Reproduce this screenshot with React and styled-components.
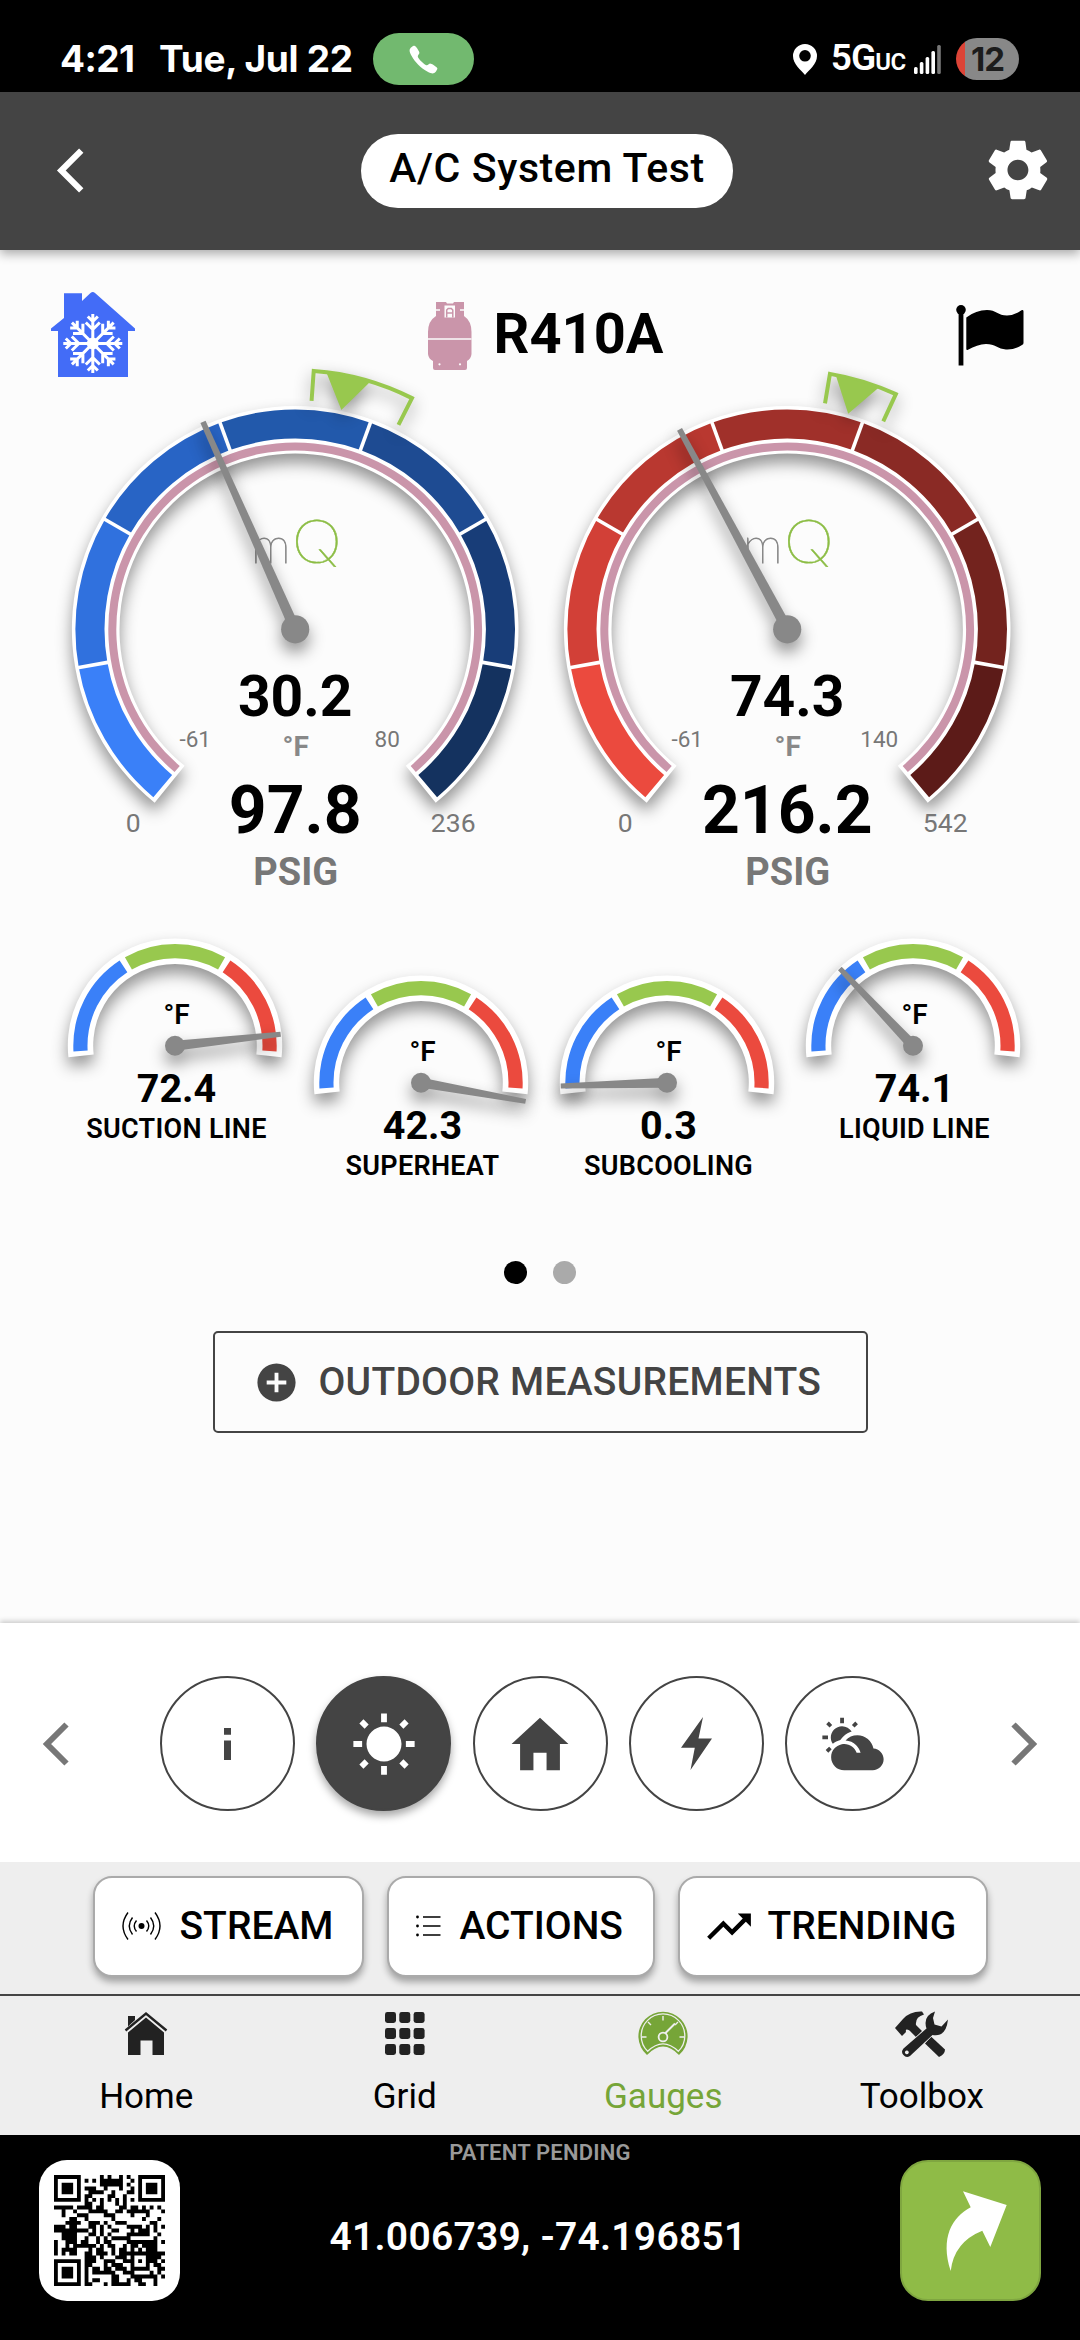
import styled, { createGlobalStyle } from "styled-components";
import {
  IoIosCall,
  IoMdAddCircle,
  IoMdHome,
  IoMdPartlySunny,
  IoMdSettings,
  IoMdSunny,
  IoMdTrendingUp,
} from "react-icons/io";

const GlobalStyle = createGlobalStyle`
    * { box-sizing: border-box; }
    body {
        margin: 0;
        background: #000;
        font-family: Roboto, "Liberation Sans", sans-serif;
        color: #000;
    }
    svg { display: block; flex: none; overflow: visible; }
    button { font: inherit; color: inherit; padding: 0; }
`;

const Screen = styled.div`
    width: 1080px;
    height: 2340px;
    display: flex;
    flex-direction: column;
    background: #fcfcfc;
    overflow: hidden;
`;

/* status bar */
const StatusBar = styled.div`
    height: 92px;
    padding: 26px 61px 0 60px;
    display: flex;
    align-items: center;
    justify-content: space-between;
    background: #000;
    color: #fff;
    font-family: Inter, sans-serif;
    font-weight: 700;
    font-size: 37px;
    line-height: 44px;
`;
const StatusGroup = styled.div`
    display: flex;
    align-items: center;
`;
const Clock = styled.span`
    width: 99px;
    letter-spacing: -0.6px;
`;
const DateText = styled.span`
    width: 214px;
    letter-spacing: -0.3px;
    white-space: nowrap;
`;
const CallPill = styled.span`
    width: 101px;
    height: 52px;
    border-radius: 26px;
    background: #72b96f;
    display: flex;
    align-items: center;
    justify-content: center;
    font-size: 37px;
`;
const Network = styled.span`
    margin: 2px 8px 0 14px;
    font-family: Roboto, sans-serif;
    font-weight: 600;
    letter-spacing: -1px;
    small { font-size: 24px; letter-spacing: -0.3px; }
`;
const Battery = styled.span`
    width: 63px;
    height: 42px;
    margin-left: 15px;
    border-radius: 21px;
    background: linear-gradient(90deg, #dc4437 9px, #888 9px);
    color: #1c1c1c;
    display: flex;
    align-items: center;
    justify-content: center;
    font-size: 33px;
    letter-spacing: -1px;
`;

/* header */
const Header = styled.header`
    position: relative;
    z-index: 1;
    height: 158px;
    padding: 0 33px 0 57px;
    display: flex;
    align-items: center;
    justify-content: space-between;
    background: #444;
    color: #fff;
    box-shadow: 0 4px 10px rgba(0, 0, 0, 0.32);
`;
const IconSlot = styled.div`
    width: ${(p) => p.$width}px;
    display: flex;
    justify-content: ${(p) => (p.$center ? "center" : "flex-start")};
    margin-top: -2px;
`;
const Title = styled.h1`
    margin: 0;
    width: 372px;
    height: 74px;
    border-radius: 37px;
    background: #fff;
    color: #000;
    font-size: 41px;
    font-weight: 500;
    letter-spacing: 0.6px;
    line-height: 69px;
    text-align: center;
    white-space: nowrap;
`;

/* content */
const Content = styled.main`
    height: 1373px;
    display: flex;
    flex-direction: column;
    align-items: center;
`;
const TopRow = styled.div`
    width: 100%;
    height: 119px;
    padding: 42px 56px 0 51px;
    display: grid;
    grid-template-columns: 84px 1fr 68px;
    align-items: start;
`;
const Refrigerant = styled.div`
    display: flex;
    justify-content: center;
    gap: 22px;
    padding-top: 10px;
    font-size: 56px;
    font-weight: 700;
    line-height: 64px;
`;
const FlagSlot = styled.div`
    padding-top: 13px;
`;
const GaugeRow = styled.div`
    width: 100%;
    height: 561px;
    padding-left: 49px;
    display: flex;
`;
const MiniRow = styled.div`
    width: 100%;
    height: 331px;
    padding-left: 52px;
    display: flex;
    align-items: flex-start;
`;
const MiniCell = styled.div`
    width: 246px;
    margin-top: ${(p) => (p.$low ? 37 : 0)}px;
    padding-left: 3px;
    text-align: center;
    svg { margin-left: -3px; }
`;
const MiniValue = styled.div`
    margin-top: 2px;
    font-size: 39.5px;
    font-weight: 700;
    line-height: 44px;
`;
const MiniLabel = styled.div`
    margin-top: 2px;
    font-size: 27px;
    font-weight: 600;
    letter-spacing: 0.3px;
    line-height: 32px;
    white-space: nowrap;
`;
const Dots = styled.div`
    display: flex;
    gap: 26px;
`;
const Dot = styled.span`
    width: 23px;
    height: 23px;
    border-radius: 50%;
    background: ${(p) => (p.$active ? "#000" : "#aaa")};
`;
const OutdoorButton = styled.button`
    width: 655px;
    height: 102px;
    margin-top: 47px;
    padding-left: 38px;
    border: 2px solid #444;
    border-radius: 5px;
    background: transparent;
    color: #444;
    display: flex;
    align-items: center;
    gap: 19px;
    font-size: 39px;
    font-weight: 500;
    letter-spacing: 0.25px;
    white-space: nowrap;
`;

/* category strip */
const Strip = styled.section`
    position: relative;
    height: 239px;
    padding: 2px 43px 0;
    display: flex;
    align-items: center;
    justify-content: space-between;
    background: #fff;
    color: #777;
    box-shadow: 0 -2px 5px rgba(0, 0, 0, 0.2);
`;
const Circles = styled.div`
    display: flex;
    gap: 21.3px;
`;
const Circle = styled.button`
    width: 135px;
    height: 135px;
    border: 2px solid #444;
    border-radius: 50%;
    background: ${(p) => (p.$active ? "#444" : "#fff")};
    color: ${(p) => (p.$active ? "#fff" : "#444")};
    box-shadow: ${(p) => (p.$active ? "0 5px 8px rgba(0, 0, 0, 0.35)" : "none")};
    display: flex;
    align-items: center;
    justify-content: center;
    font-size: 70px;
`;

/* actions */
const Actions = styled.section`
    height: 132px;
    padding-top: 14px;
    display: flex;
    justify-content: center;
    gap: 23px;
    background: #eee;
    position: relative;
`;
const ActionButton = styled.button`
    width: ${(p) => p.$width}px;
    height: 101px;
    padding: 0 0 1px ${(p) => p.$pad || 27}px;
    border: 2px solid #aaa;
    border-radius: 19px;
    background: #fff;
    box-shadow: 0 5px 7px rgba(0, 0, 0, 0.32);
    display: flex;
    align-items: center;
    gap: ${(p) => p.$gap || 19}px;
    font-size: 39px;
    font-weight: 500;
`;

/* bottom navigation */
const Nav = styled.nav`
    height: 141px;
    padding: 15px 29px 0 17px;
    border-top: 2px solid #444;
    background: #eee;
    display: flex;
`;
const NavItem = styled.a`
    flex: 1;
    display: flex;
    flex-direction: column;
    align-items: center;
    gap: 20px;
    color: ${(p) => (p.$active ? "#76a538" : "#222")};
    span {
        font-size: 35px;
        line-height: 40px;
        color: ${(p) => (p.$active ? "#76a538" : "#000")};
    }
`;

/* footer */
const Footer = styled.footer`
    height: 205px;
    padding: 0 39px;
    display: grid;
    grid-template-columns: 141px 1fr 141px;
    align-items: start;
    background: #000;
`;
const QrCard = styled.div`
    width: 141px;
    height: 141px;
    margin-top: 25px;
    padding: 15px;
    border-radius: 28px;
    background: #fff;
`;
const Location = styled.div`
    display: flex;
    flex-direction: column;
    align-items: center;
`;
const Patent = styled.div`
    margin-top: 6px;
    font-size: 22px;
    font-weight: 600;
    letter-spacing: 0.2px;
    line-height: 24px;
    color: #999;
`;
const Coordinates = styled.div`
    margin: 50px 4px 0 0;
    font-size: 39px;
    font-weight: 600;
    letter-spacing: 0.25px;
    line-height: 44px;
    color: #fff;
`;
const ShareButton = styled.button`
    width: 141px;
    height: 141px;
    margin-top: 25px;
    border: 2px solid #7fa640;
    border-radius: 28px;
    background: #8fbb47;
`;

const SvgText = styled.text`
    font-size: ${(p) => p.$size}px;
    font-weight: ${(p) => p.$weight || 700};
    fill: ${(p) => p.$color || "#000"};
    text-anchor: middle;
`;
const LogoText = styled.text`
    font-family: ${(p) => p.$family}, sans-serif;
    font-weight: 100;
    font-size: ${(p) => p.$size}px;
    fill: ${(p) => p.$color};
    stroke: ${(p) => p.$color};
    stroke-width: ${(p) => p.$stroke}px;
    text-anchor: middle;
`;
const Shadow = styled.g`
    filter: drop-shadow(0 ${(p) => p.$y || 9}px 8px rgba(0, 0, 0, 0.42));
`;

/* 0 degrees points up, clockwise is positive */
const point = (r, deg) => {
  const a = (deg * Math.PI) / 180;
  return `${(r * Math.sin(a)).toFixed(2)} ${(-r * Math.cos(a)).toFixed(2)}`;
};
const band = (r1, r2, from, to) => {
  const large = to - from > 180 ? 1 : 0;
  return `M${point(r2, from)} A${r2} ${r2} 0 ${large} 1 ${point(r2, to)} L${point(r1, to)} A${r1} ${r1} 0 ${large} 0 ${point(r1, from)} Z`;
};

const blues = ["#3a80f8", "#3071de", "#2864c5", "#2259ab", "#1e4b92", "#183d78", "#14325f"];
const reds = ["#eb4a3e", "#d24037", "#b93830", "#a0302a", "#8a2a25", "#73231e", "#5c1b18"];

const gauges = [
  { id: "low", colors: blues, temp: "30.2", tempMax: "80", pressure: "97.8", max: 236, target: 11.9, from: 4.1, to: 26.8 },
  { id: "high", colors: reds, temp: "74.3", tempMax: "140", pressure: "216.2", max: 542, target: 15.8, from: 9.5, to: 24.8 },
];

const minis = [
  { label: "SUCTION LINE", value: "72.4", angle: 83.8 },
  { label: "SUPERHEAT", value: "42.3", angle: 100.1, low: true },
  { label: "SUBCOOLING", value: "0.3", angle: -91.8, low: true },
  { label: "LIQUID LINE", value: "74.1", angle: -43.5 },
];

const Gauge = ({ gauge }) => {
  const angle = (parseFloat(gauge.pressure) / gauge.max) * 280 - 140;
  return (
    <svg width="492" height="540" viewBox="-246.2 -260.3 492 540">
      <Shadow>
        <path d={band(175.7, 223.3, -141, 141)} fill="#fff" />
      </Shadow>
      {gauge.colors.map((color, i) => (
        <path
          key={color}
          d={band(190.7, 219.8, i === 0 ? -139.8 : -140 + i * 40, i === 6 ? 139.8 : -100 + i * 40)}
          fill={color}
        />
      ))}
      {[-100, -60, -20, 20, 60, 100].map((deg) => (
        <path key={deg} d={`M${point(189, deg)} L${point(221, deg)}`} stroke="#fff" strokeWidth="3.6" />
      ))}
      <path d={band(178.9, 186.9, -139.8, 139.8)} fill="#ca95aa" />
      <Shadow $y={7}>
        <path
          d={`M${point(229, gauge.from)} L${point(259, gauge.from)} A259 259 0 0 1 ${point(259, gauge.to)} L${point(229, gauge.to)}`}
          fill="none"
          stroke="#98c84e"
          strokeWidth="4"
        />
        <path
          d={`M${point(259, gauge.target - 5)} L${point(224, gauge.target)} L${point(259, gauge.target + 5)} Z`}
          fill="#98c84e"
        />
      </Shadow>
      <LogoText $family="Lato" $size={50} $stroke={0.8} $color="#888" x="-24.5" y="-66.3">m</LogoText>
      <g transform="translate(21.5 -66.3) scale(1.16 1)">
        <LogoText $family="Inter" $size={59} $stroke={0.4} $color="#8cbd45">Q</LogoText>
      </g>
      <Shadow>
        <g transform={`rotate(${angle})`}>
          <path d="M-5.3 0 L-2.8 -227 H2.8 L5.3 0Z" fill="#888" />
        </g>
        <circle r="14.1" fill="#888" />
      </Shadow>
      <SvgText $size={57} x="0" y="86.5">{gauge.temp}</SvgText>
      <SvgText $size={22.5} $weight={400} $color="#777" x="-100" y="117.4">-61</SvgText>
      <SvgText $size={28} $color="#888" x="0.5" y="126.4">°F</SvgText>
      <SvgText $size={22.5} $weight={400} $color="#777" x="92" y="117.4">{gauge.tempMax}</SvgText>
      <SvgText $size={26.5} $weight={400} $color="#777" x="-162" y="203">0</SvgText>
      <SvgText $size={66} x="0" y="203.5">{gauge.pressure}</SvgText>
      <SvgText $size={26.5} $weight={400} $color="#777" x="158" y="203">{gauge.max}</SvgText>
      <SvgText $size={38} $color="#777" x="0.5" y="255.7">PSIG</SvgText>
    </svg>
  );
};

const MiniGauge = ({ mini }) => (
  <MiniCell $low={mini.low}>
    <svg width="246" height="135" viewBox="-123 -115.7 246 135">
      <Shadow>
        <path d={band(81.8, 107.2, -96.2, 96.2)} fill="#fff" />
      </Shadow>
      <path d={band(87.5, 101.7, -93.2, -33)} fill="#3a80f8" />
      <path d={band(87.5, 101.7, -29.5, 29.5)} fill="#98c84e" />
      <path d={band(87.5, 101.7, 33, 93.2)} fill="#eb4a3e" />
      <SvgText $size={28} $weight={600} x="1.5" y="-21.5">°F</SvgText>
      <Shadow>
        <g transform={`rotate(${mini.angle})`}>
          <path d="M-5 0 L-2.5 -106.3 H2.5 L5 0Z" fill="#888" />
        </g>
        <circle r="10" fill="#888" />
      </Shadow>
    </svg>
    <MiniValue>{mini.value}</MiniValue>
    <MiniLabel>{mini.label}</MiniLabel>
  </MiniCell>
);

const Chevron = ({ width, height, stroke, right }) => (
  <svg width={width} height={height} viewBox="0 0 26 44">
    <path
      d={right ? "M2.5 2.5 L22 22 L2.5 41.5" : "M23.5 2.5 L4 22 L23.5 41.5"}
      fill="none"
      stroke="currentColor"
      strokeWidth={stroke}
    />
  </svg>
);

const CoolHouse = () => (
  <svg width="84" height="85" viewBox="0 0 84 85">
    <path d="M13 1.3 H31 V9 L39.5 1 Q41.8 -1 44 1 L84 36.5 V39 H77 V85 H7 V39 H0 V36.5 L13 26Z" fill="#436cf7" />
    <g transform="translate(41.8 51.5)" stroke="#fff" strokeWidth="3" fill="none">
      {[0, 45, 90, 135, 180, 225, 270, 315].map((deg) => (
        <path key={deg} transform={`rotate(${deg})`} d="M0 0 V-29.5 M-5 -27 L0 -22 L5 -27 M-7 -21 L0 -14 L7 -21" />
      ))}
      <circle r="6" fill="#fff" stroke="none" />
    </g>
  </svg>
);

const Tank = () => (
  <svg width="44" height="68" viewBox="0 0 44 68">
    <path
      d="M8 0 H18 L19 1.5 H25 L26 0 H36 V14 Q43.5 19 43.5 30 V52 Q43 57 39 59 V66 Q39 68 37 68 H7 Q5 68 5 66 V59 Q.5 57 0 52 V30 Q0 19 8 14Z"
      fill="#ca95aa"
    />
    <path d="M8 8 H12 M32 8 H36 M0 37 H43.5" stroke="#fcfcfc" strokeWidth="1.6" />
    <path d="M16.5 3.5 H27 V15.5 H16.5Z" fill="#fcfcfc" />
    <path d="M18.7 15.5 V8 L20.2 6.4 H23.3 L24.8 8 V15.5 M18.7 11 H24.8" stroke="#ca95aa" strokeWidth="1.5" fill="none" />
    <circle cx="11.5" cy="62.3" r="1.1" fill="#fcfcfc" />
    <circle cx="32" cy="62.3" r="1.1" fill="#fcfcfc" />
  </svg>
);

const Flag = () => (
  <svg width="68" height="61" viewBox="0 0 68 61">
    <circle cx="5" cy="4.8" r="4.8" />
    <path d="M2.6 5 H7.4 V60.5 H2.6Z" />
    <path d="M10.3 12.5 Q20 5 31 5 C40 5 42 10.5 51 10.5 Q59 10 65.5 5.2 Q67.5 4.5 67.5 6.5 V38 Q67.5 39.5 66 40 Q58 45 50 44.5 C42 44 39 39 30 39 Q21 39.5 12 44.8 Q10.3 45.5 10.3 44Z" />
  </svg>
);

const Pin = () => (
  <svg width="24" height="31" viewBox="0 0 24 31">
    <path fillRule="evenodd" fill="#fff" d="M12 0 A12 12 0 0 1 24 12 C24 20 16 26 12 31 C8 26 0 20 0 12 A12 12 0 0 1 12 0Z M12 6 A5.8 5.8 0 1 0 12 17.6 A5.8 5.8 0 1 0 12 6Z" />
  </svg>
);

const Signal = () => (
  <svg width="27" height="29" viewBox="0 0 27 29">
    {[7, 12, 17, 23, 29].map((h, i) => (
      <rect key={h} x={i * 5.8} y={29 - h} width="3.6" height={h} rx="1.5" fill={i === 4 ? "#777" : "#fff"} />
    ))}
  </svg>
);

const StreamIcon = () => (
  <svg width="39" height="28" viewBox="-19.5 -14 39 28" fill="none" stroke="#000" strokeWidth="1.4">
    <circle r="3" fill="#000" stroke="none" />
    {[1, -1].map((side) => (
      <g key={side} transform={`scale(${side} 1)`}>
        <path d="M5 -5.5 Q9.5 0 5 5.5 M9 -8.5 Q15.5 0 9 8.5 M13.5 -13.5 Q23.5 0 13.5 13.5" />
      </g>
    ))}
  </svg>
);

const ListIcon = () => (
  <svg width="25" height="22" viewBox="0 0 25 22">
    <path d="M7 2 H24.5 M7 11 H24.5 M7 20 H24.5" stroke="#000" strokeWidth="1.5" />
    {[2, 11, 20].map((y) => (
      <circle key={y} cx="1.5" cy={y} r="1.4" />
    ))}
  </svg>
);

const InfoIcon = () => (
  <svg width="7" height="32" viewBox="0 0 7 32" fill="currentColor">
    <path d="M0 0 H7 V6.7 H0Z M0 12.5 H7 V32 H0Z" />
  </svg>
);

const BoltIcon = () => (
  <svg width="31" height="53" viewBox="0 0 31 53" fill="currentColor">
    <path d="M22 0 L17.5 21.5 H31 L9.5 53 L13.8 30.8 H0Z" />
  </svg>
);

const HouseIcon = () => (
  <svg width="42" height="46" viewBox="0 -1 42 46">
    <path d="M3 4 H10 V8 L3 14.5Z" fill="currentColor" />
    <path d="M0.5 18.5 L21 1.5 L41.5 18.5" fill="none" stroke="currentColor" strokeWidth="2.4" />
    <path d="M21 5.5 L39 20.5 V43 H27.5 V28.5 H15.5 V43 H3 V20.5Z" fill="currentColor" />
  </svg>
);

const GridIcon = () => (
  <svg width="40" height="46" viewBox="0 -1 40 46" fill="currentColor">
    {[0, 16, 32].map((y) =>
      [0, 14.3, 28.6].map((x) => <rect key={`${x}-${y}`} x={x} y={y} width="11" height="11" rx="2.4" />)
    )}
  </svg>
);

const DialIcon = () => (
  <svg width="50" height="46" viewBox="0 -1 50 46">
    <path d="M9 43 A24.6 24.6 0 1 1 41 43 Q25 26 9 43Z" fill="currentColor" />
    <g fill="none" stroke="#eee">
      <path d="M9.7 39.3 A21.8 21.8 0 1 1 40.3 39.3 Q25 24.5 9.7 39.3Z" strokeWidth="1.3" />
      <path d="M4 25 H8.5 M46 25 H41.5 M25 4 V8.5 M10 10 L13 13 M40 10 L37 13" strokeWidth="1.4" />
      <path d="M27 21.5 L37 11.5" strokeWidth="2" />
      <circle cx="25" cy="25" r="4.4" strokeWidth="1.8" />
    </g>
  </svg>
);

const ToolsIcon = () => (
  <svg width="53" height="46" viewBox="0 0 53 46" fill="currentColor">
    <path d="M0 17 L8 8 Q15 0 27 0.5 L29 3.5 Q20 6 21 14 L27 20 L21 26 L14.5 19.5 Q10 17 11 21 L7 25Z" />
    <path d="M36 25.5 L50 38.5 Q50 43 44 46 L30 32.5Z" />
    <path
      fillRule="evenodd"
      d="M40 0.5 Q27.5 5 31.5 17.5 L8.5 37.5 A5 5 0 0 0 15 45 L37.5 24 Q51 26.5 53 8.5 L46.5 15.5 L39.5 13.5 L38 7Z M11.8 39.5 A1.9 1.9 0 1 0 11.9 39.5Z"
      stroke="#eee"
      strokeWidth="1.2"
      paintOrder="stroke"
    />
  </svg>
);

const ShareArrow = () => (
  <svg width="137" height="137" viewBox="2 2 137 137">
    <path d="M63 31.3 L106.7 45 L90.3 87 L82.3 70.7 Q54 82 50.7 111 C40 78 52 57 70.7 47.3Z" fill="#fff" />
  </svg>
);

const qrRows = [
  "11111110000010100101001111111",
  "10000010101011111100101000001",
  "10111010000011111101001011101",
  "10111010111001000100101011101",
  "10111010011110010001101011101",
  "10000010110000110010001000001",
  "11111110101010101010101111111",
  "00000000110010001010000000000",
  "11111011110110000110110101010",
  "00100100011111001101111110001",
  "00100011100001110000100010000",
  "00001100100000010000000100010",
  "00011110011101001110000001100",
  "11101100011010100001111010101",
  "11111111101010011000101110100",
  "00111100011010100001111110010",
  "00111100100101011111000000100",
  "10011101100101100001111111101",
  "10010111111010110010110111100",
  "10111100010110010110101011100",
  "10101100110111010111111111111",
  "00000000111010001110100011110",
  "11111110111001110011101011101",
  "10000010110001011100100010110",
  "10111010101101101110111110011",
  "10111010101111110011100001010",
  "10111010100000011000111111101",
  "10000010101100011001011000100",
  "11111110110001011111001100100",
];

const qrPath = qrRows
  .map((row, y) =>
    [...row.matchAll(/1+/g)].map((m) => `M${m.index} ${y}h${m[0].length}v1.02h-${m[0].length}z`).join("")
  )
  .join("");

const QrCode = () => (
  <svg width="111" height="111" viewBox="0 0 29 29">
    <path d={qrPath} />
  </svg>
);

const App = () => {
  return (
    <Screen>
      <GlobalStyle />
      <StatusBar>
        <StatusGroup>
          <Clock>4:21</Clock>
          <DateText>Tue, Jul 22</DateText>
          <CallPill><IoIosCall /></CallPill>
        </StatusGroup>
        <StatusGroup>
          <Pin />
          <Network>5G<small>UC</small></Network>
          <Signal />
          <Battery>12</Battery>
        </StatusGroup>
      </StatusBar>
      <Header>
        <IconSlot $width={48}><Chevron width={27} height={45} stroke={6} /></IconSlot>
        <Title>A/C System Test</Title>
        <IconSlot $width={58} $center><IoMdSettings size={72} /></IconSlot>
      </Header>
      <Content>
        <TopRow>
          <CoolHouse />
          <Refrigerant><Tank />R410A</Refrigerant>
          <FlagSlot><Flag /></FlagSlot>
        </TopRow>
        <GaugeRow>
          {gauges.map((gauge) => <Gauge key={gauge.id} gauge={gauge} />)}
        </GaugeRow>
        <MiniRow>
          {minis.map((mini) => <MiniGauge key={mini.label} mini={mini} />)}
        </MiniRow>
        <Dots><Dot $active /><Dot /></Dots>
        <OutdoorButton><IoMdAddCircle size={47} />OUTDOOR MEASUREMENTS</OutdoorButton>
      </Content>
      <Strip>
        <Chevron width={26} height={44} stroke={6} />
        <Circles>
          <Circle><InfoIcon /></Circle>
          <Circle $active><IoMdSunny /></Circle>
          <Circle><IoMdHome /></Circle>
          <Circle><BoltIcon /></Circle>
          <Circle><IoMdPartlySunny /></Circle>
        </Circles>
        <Chevron width={26} height={44} stroke={6} right />
      </Strip>
      <Actions>
        <ActionButton $width={271}><StreamIcon />STREAM</ActionButton>
        <ActionButton $width={268}><ListIcon />ACTIONS</ActionButton>
        <ActionButton $width={310} $pad={24} $gap={14}><IoMdTrendingUp size={50} />TRENDING</ActionButton>
      </Actions>
      <Nav>
        <NavItem><HouseIcon /><span>Home</span></NavItem>
        <NavItem><GridIcon /><span>Grid</span></NavItem>
        <NavItem $active><DialIcon /><span>Gauges</span></NavItem>
        <NavItem><ToolsIcon /><span>Toolbox</span></NavItem>
      </Nav>
      <Footer>
        <QrCard><QrCode /></QrCard>
        <Location>
          <Patent>PATENT PENDING</Patent>
          <Coordinates>41.006739, -74.196851</Coordinates>
        </Location>
        <ShareButton><ShareArrow /></ShareButton>
      </Footer>
    </Screen>
  );
};

export default App;
